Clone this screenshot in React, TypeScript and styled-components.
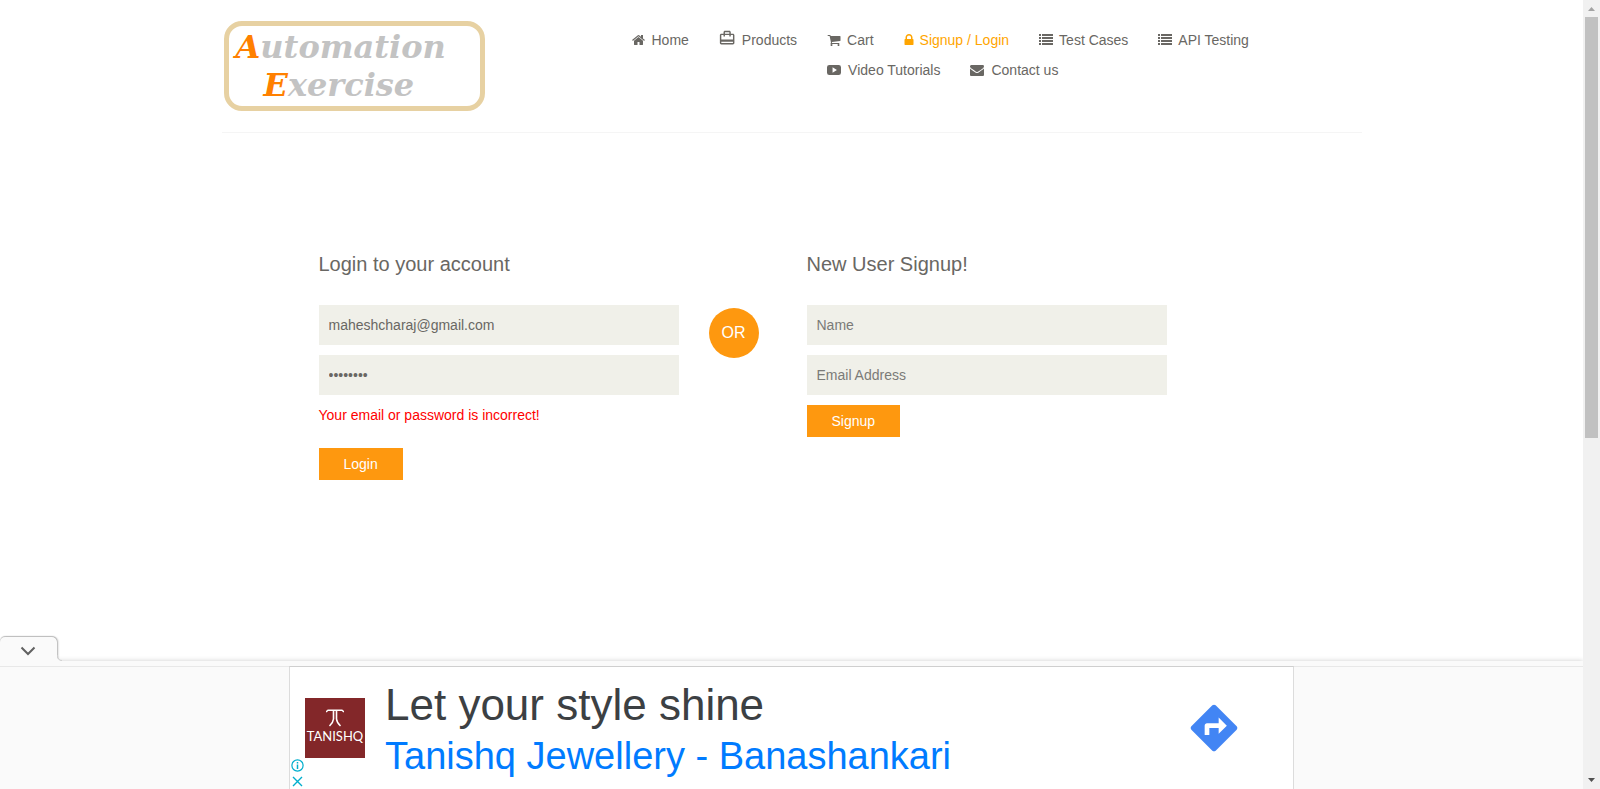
import React from "react";
import styled, { createGlobalStyle } from "styled-components";

const GlobalStyle = createGlobalStyle`
  *, *::before, *::after { box-sizing: border-box; }
  body {
    margin: 0;
    background: #fff;
    color: #696763;
    font-family: "Liberation Sans", Arial, sans-serif;
    font-size: 14px;
    line-height: 20px;
  }
  h2, p { margin: 0; font-weight: 400; }
`;

const Window = styled.div`
  display: grid;
  grid-template-columns: minmax(0, 1fr) 17px;
  height: 100vh;
  overflow: hidden;
`;

const Page = styled.div`
  display: flex;
  flex-direction: column;
  min-height: 0;
  overflow: hidden;
`;

const Content = styled.div`
  flex: 1;
  min-height: 0;
  overflow: hidden;
`;

const Container = styled.div`
  width: 100%;
  max-width: 1170px;
  margin: 0 auto;
  padding: 0 15px;
`;

const Header = styled.header`
  display: grid;
  grid-template-columns: 1fr 2fr;
  align-items: start;
  padding: 21px 0;
  border-bottom: 1px solid #f5f5f5;
`;

const Logo = styled.a`
  justify-self: start;
  width: 261px;
  height: 90px;
  margin-left: 2px;
  padding: 2px 7px;
  border: 5px solid #e7d1a2;
  border-radius: 18px;
  color: #c3c3c3;
  font-family: "DejaVu Serif", serif;
  font-style: italic;
  font-weight: 700;
  font-size: 32px;
  line-height: 38px;
  text-decoration: none;
  white-space: nowrap;
`;

const LogoLine = styled.span<{ $indent?: boolean }>`
  display: block;
  padding-left: ${(p) => (p.$indent ? "28px" : "0")};
`;

const LogoInitial = styled.span`
  color: #ff8000;
`;

const Nav = styled.nav`
  display: flex;
  gap: 30px;
  padding: 9px 0 0 30px;
`;

const NavGroup = styled.div`
  display: flex;
  flex: 1;
  flex-wrap: wrap;
  gap: 10px 30px;
  max-width: 460px;
`;

const NavLink = styled.a<{ $active?: boolean }>`
  display: inline-flex;
  align-items: center;
  gap: 6px;
  height: 20px;
  color: ${(p) => (p.$active ? "#ffa500" : "#696763")};
  text-decoration: none;
  white-space: nowrap;
`;

const Glyph = styled.svg`
  flex: none;
  fill: currentColor;
`;

const RaisedGlyph = styled(Glyph)`
  align-self: flex-end;
  margin-bottom: 4px;
`;

const Forms = styled.main`
  display: grid;
  grid-template-columns: 360px 128px 360px;
  padding: 119px 0 0 97px;
`;

const FormColumn = styled.form`
  display: flex;
  flex-direction: column;
  align-items: flex-start;
  gap: 10px;
`;

const Heading = styled.h2`
  margin-bottom: 19px;
  font-size: 20px;
  line-height: 24px;
`;

const Field = styled.input`
  width: 100%;
  height: 40px;
  padding: 0 10px;
  border: 0;
  outline: 0;
  border-radius: 0;
  background: #f0f0e9;
  color: #696763;
  font: inherit;
  &::placeholder { color: #7b7b78; opacity: 1; }
`;

const ErrorText = styled.p`
  margin-bottom: 13px;
  color: #f00;
`;

const SubmitButton = styled.button`
  height: 32px;
  padding: 0 25px;
  border: 0;
  background: #fe980f;
  color: #fff;
  font: inherit;
`;

const OrBadge = styled.h2`
  width: 50px;
  height: 50px;
  margin: 56px 0 0 30px;
  border-radius: 50%;
  background: #fe980f;
  color: #fff;
  font-size: 16px;
  line-height: 50px;
  text-align: center;
`;

const AdDock = styled.aside`
  position: relative;
  border-top: 5px solid #fafafa;
  background: #fafafa;
  box-shadow: 0 0 5px rgba(0, 0, 0, 0.2);
`;

const CollapseTab = styled.button`
  position: absolute;
  left: 0;
  bottom: 100%;
  display: flex;
  align-items: center;
  justify-content: center;
  width: 57px;
  height: 24px;
  margin-bottom: 5px;
  padding: 4px 1px 0 0;
  border: 0;
  border-radius: 5px 5px 0 0;
  background: #fafafa;
  box-shadow: 0 -1px 1px rgba(0, 0, 0, 0.2), 1px 0 2px rgba(0, 0, 0, 0.3);
  clip-path: inset(-3px -5px 0 0);
`;

const TabFlare = styled.svg`
  position: absolute;
  left: 57px;
  bottom: 100%;
  margin-bottom: 5px;
`;

const AdRule = styled.div`
  border-top: 1px solid #e8e8e8;
`;

const Ad = styled.div`
  display: grid;
  grid-template-columns: 80px 1fr auto;
  width: 100%;
  max-width: 1005px;
  height: 123px;
  margin: -1px auto 0;
  border: solid #dcdcdc;
  border-width: 1px 1px 0;
  border-top-color: #cfcfcf;
  background: #fff;
`;

const AdBrand = styled.div`
  display: flex;
  flex-direction: column;
  padding: 31px 0 0 15px;
`;

const BrandTile = styled.div`
  display: flex;
  flex-direction: column;
  align-items: center;
  width: 60px;
  height: 60px;
  padding-top: 11px;
  background: #832729;
  color: #fff;
  font-family: Lato, "Liberation Sans", sans-serif;
  font-size: 13px;
  line-height: 18px;
`;

const AdMarks = styled.div`
  display: flex;
  flex-direction: column;
  align-items: flex-start;
  gap: 3px;
  margin: 1px 0 0 -14px;
`;

const IconButton = styled.button`
  display: block;
  height: 13px;
  padding: 0;
  border: 0;
  background: none;
`;

const AdCopy = styled.div`
  padding: 12px 0 0 15px;
`;

const AdTitle = styled.p`
  color: #3c4043;
  font-size: 44px;
  line-height: 52px;
  white-space: nowrap;
`;

const AdLink = styled.a`
  color: #007bff;
  font-size: 38px;
  line-height: 50px;
  text-decoration: none;
  white-space: nowrap;
`;

const Directions = styled.a`
  padding: 33px 51px 0 0;
  color: #4285f4;
`;

const Scrollbar = styled.div`
  display: flex;
  flex-direction: column;
  align-items: center;
  background: #f1f1f1;
`;

const ScrollArrow = styled.svg`
  flex: none;
  width: 17px;
  height: 17px;
`;

const ScrollTrack = styled.div`
  flex: 1;
  width: 13px;
`;

const ScrollThumb = styled.div`
  height: calc(56% - 2px);
  background: #c1c1c1;
`;

const paths = {
  home: "M1408 992v480q0 26-19 45t-45 19h-384v-384h-256v384h-384q-26 0-45-19t-19-45v-480q0-1 .5-3t.5-3l575-474 575 474q1 2 1 6zm223-69l-62 74q-8 9-21 11h-3q-13 0-21-7l-692-577-692 577q-12 8-24 7-13-2-21-11l-62-74q-8-10-7-23.5t11-21.5l719-599q32-26 76-26t76 26l244 204v-195q0-14 9-23t23-9h192q14 0 23 9t9 23v408l219 182q10 8 11 21.5t-7 23.5z",
  cart: "M704 1536q0 52-38 90t-90 38-90-38-38-90 38-90 90-38 90 38 38 90zm896 0q0 52-38 90t-90 38-90-38-38-90 38-90 90-38 90 38 38 90zm128-1088v512q0 24-16.5 42.5t-40.5 21.5l-1044 122q13 60 13 70 0 16-24 64h920q26 0 45 19t19 45-19 45-45 19h-1024q-26 0-45-19t-19-45q0-11 8-31.5t16-36 21.5-40 15.5-29.5l-177-823h-204q-26 0-45-19t-19-45 19-45 45-19h256q16 0 28.5 6.5t19.5 15.5 13 24.5 8 26 5.5 29.5 4.5 26h1201q26 0 45 19t19 45z",
  lock: "M640 768h512v-192q0-106-75-181t-181-75-181 75-75 181v192zm832 96v576q0 40-28 68t-68 28h-960q-40 0-68-28t-28-68v-576q0-40 28-68t68-28h32v-192q0-184 132-316t316-132 316 132 132 316v192h32q40 0 68 28t28 68z",
  list: "M0 128h256v256H0zM384 128h1408v256H384zM0 512h256v256H0zM384 512h1408v256H384zM0 896h256v256H0zM384 896h1408v256H384zM0 1280h256v256H0zM384 1280h1408v256H384z",
  video: "M300 256h1192q300 0 300 300v680q0 300-300 300H300q-300 0-300-300V556q0-300 300-300zM710 550v700l560-350z",
  mail: "M1792 710v794q0 66-47 113t-113 47h-1472q-66 0-113-47t-47-113v-794q44 49 101 87 362 246 497 345 57 42 92.500 65.500t94.500 48 110 24.500h2q51 0 110-24.500t94.500-48 92.500-65.500q170-123 498-345 57-39 100-87zm0-294q0 79-49 151t-122 123q-376 261-468 325-10 7-42.500 31t-54 38.500-52 32.500-57.500 27-50 9h-2q-23 0-50-9t-57.500-27-52-32.500-54-38.500-42.500-31q-91-64-262-182.500t-205-142.500q-62-42-117-115.500t-55-136.500q0-78 41.500-130t118.500-52h1472q65 0 112.500 47t47.500 113z",
  travel: "M20 6h-3V4c0-1.110-.89-2-2-2H9c-1.110 0-2 .89-2 2v2H4c-1.110 0-2 .89-2 2v11c0 1.110.89 2 2 2h16c1.110 0 2-.89 2-2V8c0-1.110-.89-2-2-2zM9 4h6v2H9V4zm11 15H4v-2h16v2zm0-5H4V8h3v2h2V8h6v2h2V8h3v6z",
  directions: "M21.710 11.290l-9-9c-.39-.39-1.020-.39-1.410 0l-9 9c-.39.39-.39 1.020 0 1.410l9 9c.39.39 1.020.39 1.410 0l9-9c.39-.38.39-1.010 0-1.410zM14 14.500V12h-4v3H8v-4c0-.55.45-1 1-1h5V7.500l3.500 3.500-3.500 3.500z",
};

type IconName = "home" | "cart" | "lock" | "list" | "video" | "mail";

const glyphBoxes: Record<IconName, { width: number; viewBox: string }> = {
  home: { width: 14, viewBox: "0 0 1792 1792" },
  cart: { width: 14, viewBox: "0 0 1792 1792" },
  lock: { width: 10, viewBox: "256 0 1280 1792" },
  list: { width: 14, viewBox: "0 0 1792 1792" },
  video: { width: 15, viewBox: "0 0 1920 1792" },
  mail: { width: 15, viewBox: "0 0 1920 1792" },
};

const NavIcon = ({ name }: { name: IconName }) => (
  <Glyph {...glyphBoxes[name]} height={14} aria-hidden="true">
    <path d={paths[name]} fillRule={name === "video" ? "evenodd" : "nonzero"} />
  </Glyph>
);

const groupedLinks: { icon: IconName; label: string; active?: boolean }[] = [
  { icon: "cart", label: "Cart" },
  { icon: "lock", label: "Signup / Login", active: true },
  { icon: "list", label: "Test Cases" },
  { icon: "list", label: "API Testing" },
  { icon: "video", label: "Video Tutorials" },
  { icon: "mail", label: "Contact us" },
];

const SiteHeader = () => (
  <Header>
    <Logo href="#home">
      <LogoLine>
        <LogoInitial>A</LogoInitial>utomation
      </LogoLine>
      <LogoLine $indent>
        <LogoInitial>E</LogoInitial>xercise
      </LogoLine>
    </Logo>
    <Nav>
      <NavLink href="#home">
        <NavIcon name="home" />
        Home
      </NavLink>
      <NavLink href="#products">
        <RaisedGlyph width="17" height="16" viewBox="1 1 23 22" aria-hidden="true">
          <path d={paths.travel} />
        </RaisedGlyph>
        Products
      </NavLink>
      <NavGroup>
        {groupedLinks.map((link) => (
          <NavLink key={link.label} href="#" $active={link.active}>
            <NavIcon name={link.icon} />
            {link.label}
          </NavLink>
        ))}
      </NavGroup>
    </Nav>
  </Header>
);

const keepOnPage = (event: React.FormEvent) => event.preventDefault();

const AccountForms = () => (
  <Forms>
    <FormColumn onSubmit={keepOnPage}>
      <Heading>Login to your account</Heading>
      <Field type="email" aria-label="Email Address" defaultValue="maheshcharaj@gmail.com" />
      <Field type="password" aria-label="Password" defaultValue="password" />
      <ErrorText role="alert">Your email or password is incorrect!</ErrorText>
      <SubmitButton type="submit">Login</SubmitButton>
    </FormColumn>
    <OrBadge>OR</OrBadge>
    <FormColumn onSubmit={keepOnPage}>
      <Heading>New User Signup!</Heading>
      <Field type="text" aria-label="Name" placeholder="Name" />
      <Field type="email" aria-label="Email Address" placeholder="Email Address" />
      <SubmitButton type="submit">Signup</SubmitButton>
    </FormColumn>
  </Forms>
);

const AdBanner = () => (
  <AdDock>
    <CollapseTab aria-label="Hide advertisement">
      <svg width="16" height="10" viewBox="0 0 16 10" fill="none" stroke="#616161" strokeWidth="2">
        <path d="M1.500 1.500L8 8L14.500 1.500" />
      </svg>
    </CollapseTab>
    <TabFlare width="6" height="6" viewBox="0 0 6 6" aria-hidden="true">
      <path d="M0 0Q0 6 6 6H0Z" fill="#fafafa" />
      <path d="M0.500 0Q0.500 5.500 5 5.500" fill="none" stroke="#cfcfcf" />
    </TabFlare>
    <AdRule />
    <Ad>
      <AdBrand>
        <BrandTile>
          <svg width="18" height="18" viewBox="0 0 18 18" fill="none" stroke="#fff" aria-hidden="true">
            <path d="M0 3L2 1.200H16L18 3" strokeWidth="1.400" />
            <path d="M7.500 1V10Q7 14 3.500 17M10.500 1V10Q11 14 14.500 17" strokeWidth="1.600" />
          </svg>
          TANISHQ
        </BrandTile>
        <AdMarks>
          <IconButton aria-label="About this ad">
            <svg width="13" height="13" viewBox="0 0 13 13" fill="none" stroke="#00aecd">
              <circle cx="6.500" cy="6.500" r="5.600" strokeWidth="1.200" />
              <path d="M6.500 5.500V10M6.500 3V4.500" strokeWidth="1.500" />
            </svg>
          </IconButton>
          <IconButton aria-label="Close ad">
            <svg width="13" height="13" viewBox="0 0 13 13" fill="none" stroke="#00aecd">
              <path d="M2 2L11 11M11 2L2 11" strokeWidth="1.400" />
            </svg>
          </IconButton>
        </AdMarks>
      </AdBrand>
      <AdCopy>
        <AdTitle>Let your style shine</AdTitle>
        <AdLink href="#store">Tanishq Jewellery - Banashankari</AdLink>
      </AdCopy>
      <Directions href="#directions" aria-label="Directions">
        <Glyph width="56" height="56" viewBox="0 0 24 24" aria-hidden="true">
          <path d={paths.directions} />
        </Glyph>
      </Directions>
    </Ad>
  </AdDock>
);

export default function App() {
  return (
    <Window>
      <GlobalStyle />
      <Page>
        <Content>
          <Container>
            <SiteHeader />
            <AccountForms />
          </Container>
        </Content>
        <AdBanner />
      </Page>
      <Scrollbar aria-hidden="true">
        <ScrollArrow viewBox="0 0 17 17" fill="#a3a3a3">
          <path d="M5 11H12L8.500 7Z" />
        </ScrollArrow>
        <ScrollTrack>
          <ScrollThumb />
        </ScrollTrack>
        <ScrollArrow viewBox="0 0 17 17" fill="#505050">
          <path d="M5 6H12L8.500 10Z" />
        </ScrollArrow>
      </Scrollbar>
    </Window>
  );
}
